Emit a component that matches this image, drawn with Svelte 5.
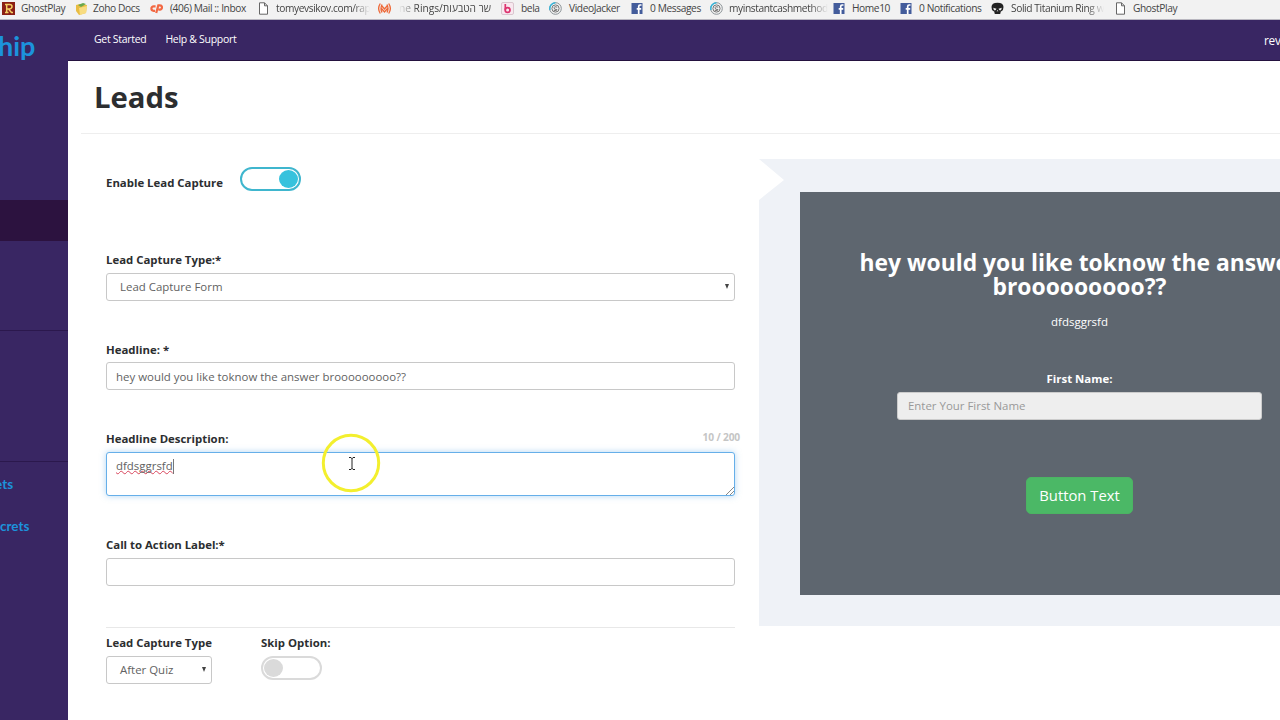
<script>
  const bookmarks = [
    { icon: 'ghost', label: 'GhostPlay', width: 73, gap: 6 },
    { icon: 'docs', label: 'Zoho Docs', width: 75, gap: 5 },
    { icon: 'cpanel', label: '(406) Mail :: Inbox', width: 107, gap: 7 },
    { icon: 'page', label: 'tomyevsikov.com/rap', width: 121, gap: 6, fade: 'right' },
    { icon: 'rings', label: 'ne Rings/שר הטבעות', width: 123, gap: 8, fade: 'left' },
    { icon: 'bela', label: 'bela', width: 48, gap: 7 },
    { icon: 'swirl', label: 'VideoJacker', width: 82, gap: 7 },
    { icon: 'facebook', label: '0 Messages', width: 79, gap: 6 },
    { icon: 'swirl', label: 'myinstantcashmethod', width: 123, gap: 6, fade: 'right' },
    { icon: 'facebook', label: 'Home10', width: 67, gap: 6 },
    { icon: 'facebook', label: '0 Notifications', width: 91, gap: 6 },
    { icon: 'skull', label: 'Solid Titanium Ring w', width: 123, gap: 7, fade: 'right' },
    { icon: 'page', label: 'GhostPlay', width: 80, gap: 6 }
  ];

  let enabled = $state(true);
  let skip = $state(false);
  let captureType = $state('Lead Capture Form');
  let headline = $state('hey would you like toknow the answer brooooooooo??');
  let description = $state('dfdsggrsfd');
  let action = $state('');
  let timing = $state('After Quiz');
</script>

<div class="screen">
  <nav class="bookmarks">
    {#each bookmarks as b}
      <div class="bookmark" style="width: {b.width}px; gap: {b.gap}px">
        <svg width="13" height="13" viewBox="0 0 13 13">
          {#if b.icon === 'ghost'}
            <rect width="13" height="13" fill="#8b1f14" />
            <path d="M3 2.5h4.5q2.5 0 2.5 2T7.5 7H5M4.7 2.5v8M3 10.5h3.5M6.5 7l3 3.5h1.5" fill="none" stroke="#f5cf63" stroke-width="1.5" />
          {:else if b.icon === 'docs'}
            <path d="M1 3l4-1 7 1-1 8-7 2-3-4z" fill="#e9bd43" />
            <path d="M3 3l5-2 3 1-5 3z" fill="#69a84d" />
            <path d="M4 6l8-2-1 7-6 2z" fill="#f8dc80" />
          {:else if b.icon === 'cpanel'}
            <path d="M5.6 4.4H3.6a2.2 2.2 0 0 0 0 4.4h1.4M6.2 11l2.1-7.6h1.6a2.1 2.1 0 0 1 0 4.2H8.4" fill="none" stroke="#f26842" stroke-width="2.2" />
          {:else if b.icon === 'page'}
            <path d="M2.5 .8h5l3 3v8.4h-8zM7.5 .8v3h3" fill="#fff" stroke="#666" />
          {:else if b.icon === 'rings'}
            <path d="M2.3 1.5Q-1 6.5 2.3 11.5M10.7 1.5q3.3 5 0 10M4 2.5q-2 4 0 8M9 2.5q2 4 0 8M3.5 3.5l3 3.5 3-3.5M3.5 6.5l3 3.5 3-3.5" fill="none" stroke="#ee6837" stroke-width="1.3" />
          {:else if b.icon === 'bela'}
            <rect x=".5" y=".5" width="12" height="12" rx="1.5" fill="#f8e8ef" stroke="#d9c6ce" />
            <path d="M4.3 2v6.2" stroke="#dc346f" stroke-width="1.7" />
            <circle cx="6.6" cy="8" r="2.4" fill="none" stroke="#dc346f" stroke-width="1.7" />
          {:else if b.icon === 'swirl'}
            <circle cx="6.5" cy="6.5" r="5.8" fill="none" stroke="#8b9296" />
            <path d="M1 8A5.8 5.8 0 0 1 6.5.7" fill="none" stroke="#35b4d9" stroke-width="1.4" />
            <circle cx="6.5" cy="6.5" r="3.6" fill="none" stroke="#777" />
            <path d="M8.2 5.2Q5 3.8 5 5.8t3 1.7q0 2-3.2.8" fill="none" stroke="#777" />
          {:else if b.icon === 'facebook'}
            <rect x=".5" y="1" width="11" height="11" fill="#435c9b" />
            <path d="M10.5 3H9.1Q7.7 3 7.7 4.6V12M5.7 6.8h4.5" fill="none" stroke="#fff" stroke-width="1.7" />
          {:else}
            <path d="M.5 5Q.5.7 6.5.7T12.5 5q0 3-1.7 4l-1 .5-.6 2.5H3.8l-.6-2.5-1-.5Q.5 8 .5 5z" fill="#222" />
            <path d="M2.2 5.7l3.3 1-.9 1.5H3zM10.8 5.7l-3.3 1 .9 1.5H10zM6.5 8l.9 1.3H5.6z" fill="#eee" />
          {/if}
        </svg>
        <span class="name {b.fade ?? ''}">{b.label}</span>
      </div>
    {/each}
  </nav>

  <div class="app">
    <aside>
      <div class="logo">hip</div>
      <div class="group top"><div class="active"></div></div>
      <div class="group"></div>
      <div class="group links">
        <a class="short" href="#secrets">ets</a>
        <a href="#more-secrets">crets</a>
      </div>
    </aside>

    <div class="body">
      <header>
        <a href="#start">Get Started</a>
        <a href="#help">Help &amp; Support</a>
        <span class="user">rev</span>
      </header>

      <main>
        <h1>Leads</h1>
        <div class="columns">
          <form>
            <div class="enable">
              <span class="label">Enable Lead Capture</span>
              <button type="button" class="switch" class:on={enabled} aria-label="Enable" onclick={() => (enabled = !enabled)}><i></i></button>
            </div>

            <div class="field type">
              <span class="label">Lead Capture Type:*</span>
              <div class="control select">{captureType}<span class="arrow"></span></div>
            </div>
            <div class="field headline">
              <label class="label" for="headline">Headline: *</label>
              <input id="headline" class="control" bind:value={headline} />
            </div>
            <div class="field description">
              <div class="label-row">
                <span class="label">Headline Description:</span>
                <span class="count">{description.length} / 200</span>
              </div>
              <div class="control area">
                <span class="typed">{description}</span><span class="caret"></span>
                <svg class="grip" width="8" height="8" viewBox="0 0 8 8"><path d="M0 8l8-8M4 8l4-4" stroke="#888" fill="none" /></svg>
                <svg class="pointer" width="60" height="60" viewBox="0 0 60 60">
                  <circle cx="30" cy="30" r="27.7" fill="none" stroke="#f3ef2e" stroke-width="3" />
                  <path d="M28 24.5h2l1 1 1-1h2M31 25v11M28 36.5h2l1-1 1 1h2" fill="none" stroke="#222" />
                </svg>
              </div>
            </div>
            <div class="field action">
              <label class="label" for="action">Call to Action Label:*</label>
              <input id="action" class="control" bind:value={action} />
            </div>

            <div class="options">
              <div class="timing">
                <span class="label">Lead Capture Type</span>
                <div class="control select">{timing}<span class="arrow"></span></div>
              </div>
              <div>
                <span class="label">Skip Option:</span>
                <button type="button" class="switch" class:on={skip} aria-label="Skip" onclick={() => (skip = !skip)}><i></i></button>
              </div>
            </div>
          </form>

          <section class="preview">
            <div class="card">
              <h2>{headline}</h2>
              <p>{description}</p>
              <div class="first-name">First Name:</div>
              <div class="control placeholder">Enter Your First Name</div>
              <button type="button" class="cta">Button Text</button>
            </div>
          </section>
        </div>
      </main>
    </div>
  </div>
</div>

<style>
  :global(body) {
    margin: 0;
    overflow: hidden;
  }
  * {
    box-sizing: border-box;
  }
  .screen {
    width: 1280px;
    height: 720px;
    overflow: hidden;
    display: flex;
    flex-direction: column;
    background: #fff;
    font-family: 'Open Sans', 'Liberation Sans', sans-serif;
    font-size: 11.5px;
    color: #2c2e30;
  }
  a {
    color: inherit;
    text-decoration: none;
  }
  .bookmarks {
    display: flex;
    flex: none;
    height: 20px;
    padding-left: 2px;
    background: #f2f2f2;
    border-bottom: 1px solid #b9b7c0;
  }
  .bookmark {
    display: flex;
    flex: none;
    align-items: center;
    height: 16px;
    font-size: 10.2px;
    letter-spacing: -0.4px;
    color: #444;
    white-space: nowrap;
  }
  .bookmark svg {
    flex: none;
  }
  .right {
    mask-image: linear-gradient(to right, #000 82%, transparent);
  }
  .left {
    letter-spacing: 0;
    mask-image: linear-gradient(to left, #000 80%, transparent);
  }

  .app {
    display: flex;
    flex: 1;
    min-height: 0;
  }
  aside {
    display: flex;
    flex-direction: column;
    flex: none;
    width: 68px;
    background: #392663;
    color: #1c93dc;
    overflow: hidden;
  }
  .logo {
    height: 180px;
    padding-top: 10px;
    margin-left: -2px;
    font: 700 27px/32px Lato, sans-serif;
  }
  .group {
    flex: none;
    height: 131px;
    border-bottom: 1px solid #2b184d;
  }
  .active {
    height: 41px;
    background: #2c123f;
  }
  .links {
    display: flex;
    flex-direction: column;
    gap: 26px;
    padding-top: 14px;
    font: 700 13.5px/16px Lato, sans-serif;
    border: 0;
  }
  .short {
    margin-left: -5px;
  }
  .body {
    flex: 1;
    min-width: 0;
  }
  header {
    display: flex;
    height: 41px;
    padding: 0 0 0 26px;
    background: #392663;
    border-bottom: 1px solid #24123f;
    color: #fff;
    font-size: 10.5px;
    letter-spacing: -0.3px;
    line-height: 39px;
    gap: 19px;
    overflow: hidden;
  }
  .user {
    flex: none;
    width: 16px;
    margin-left: auto;
    font-size: 11.8px;
    letter-spacing: -0.2px;
    line-height: 41px;
  }
  main {
    padding-left: 13px;
  }
  h1 {
    height: 73px;
    margin: 0;
    padding: 16px 0 0 13px;
    border-bottom: 1px solid #eee;
    font-size: 29.3px;
    line-height: 41px;
  }
  .columns {
    display: flex;
    align-items: flex-start;
    padding: 25px 0 0 25px;
  }
  form {
    flex: none;
    width: 629px;
  }
  .label {
    display: block;
    font-weight: 700;
    font-size: 11.4px;
    line-height: 14px;
    white-space: nowrap;
  }
  .enable {
    display: flex;
    align-items: flex-start;
    height: 94px;
    padding-top: 8px;
  }
  .enable .label {
    width: 134px;
    padding-top: 9px;
  }
  .switch {
    display: flex;
    width: 61px;
    height: 24px;
    padding: 1px;
    border: 2px solid #dadada;
    border-radius: 13px;
    background: #fff;
  }
  .switch i {
    width: 19px;
    height: 18px;
    border-radius: 50%;
    background: #dadada;
  }
  .switch.on {
    justify-content: flex-end;
    border-color: #3fb6ce;
  }
  .switch.on i {
    background: #37c2dd;
  }
  .field {
    height: 90px;
  }
  .field.type {
    height: 89px;
  }
  .control {
    display: block;
    width: 100%;
    height: 28px;
    margin-top: 6px;
    padding: 0 9px;
    border: 1px solid #c8c8c8;
    border-radius: 3px;
    background: #fff;
    color: #626262;
    font-family: inherit;
    font-size: 11.45px;
    line-height: 26px;
    outline: 0;
  }
  .headline .label {
    line-height: 15px;
  }
  .headline .control {
    margin-top: 5px;
  }
  .select {
    display: flex;
    align-items: center;
    justify-content: space-between;
    padding: 0 5px 0 13px;
  }
  .arrow {
    margin-top: -1px;
    border: 2.5px solid transparent;
    border-top: 5px solid #444;
    border-bottom: 0;
  }
  .field.description {
    height: 106px;
  }
  .label-row {
    display: flex;
    justify-content: space-between;
    margin-right: -5px;
  }
  .count {
    color: #c5c5c5;
    font-size: 10.2px;
    font-weight: 700;
    letter-spacing: -0.15px;
    line-height: 10px;
  }
  .area {
    position: relative;
    height: 44px;
    border-color: #66afe9;
    box-shadow: 0 0 6px rgba(102, 175, 233, 0.5);
  }
  .typed {
    text-decoration: underline wavy #d8455c 1px;
    text-decoration-skip-ink: none;
    text-underline-offset: 0;
  }
  .caret {
    display: inline-block;
    height: 15px;
    border-left: 1px solid #777;
    vertical-align: middle;
  }
  .grip {
    position: absolute;
    right: 0;
    bottom: 0;
  }
  .pointer {
    position: absolute;
    left: 214px;
    top: -20px;
  }
  .field.action {
    height: 89px;
  }
  .options {
    display: flex;
    gap: 49px;
    padding-top: 8px;
    border-top: 1px solid #e8e8e8;
  }
  .timing {
    width: 106px;
  }
  .options .switch {
    margin-top: 6px;
  }

  .preview {
    flex: none;
    width: 640px;
    height: 467px;
    margin-left: 24px;
    padding: 33px 0 0 41px;
    background: #eff2f7;
    clip-path: polygon(0 0, 100% 0, 100% 100%, 0 100%, 0 41px, 25px 21px);
  }
  .card {
    display: flex;
    flex-direction: column;
    align-items: center;
    width: 559px;
    height: 403px;
    padding: 59px 50px 0;
    background: #5e666f;
    color: #fff;
    text-align: center;
  }
  h2 {
    margin: 0;
    font-size: 22.85px;
    line-height: 24.4px;
  }
  p {
    margin: 14px 0 0;
    line-height: 16px;
  }
  .first-name {
    margin-top: 42px;
    font-weight: 700;
    font-size: 11.4px;
    line-height: 14px;
  }
  .placeholder {
    width: 365px;
    padding-left: 10px;
    background: #eee;
    border-color: #ccc;
    color: #999;
    text-align: left;
  }
  .cta {
    width: 107px;
    height: 37px;
    margin-top: 57px;
    padding: 0;
    border: 1px solid #4cb463;
    border-radius: 5px;
    background: #4bb866;
    color: #fff;
    font-family: inherit;
    font-size: 14.8px;
  }
</style>
